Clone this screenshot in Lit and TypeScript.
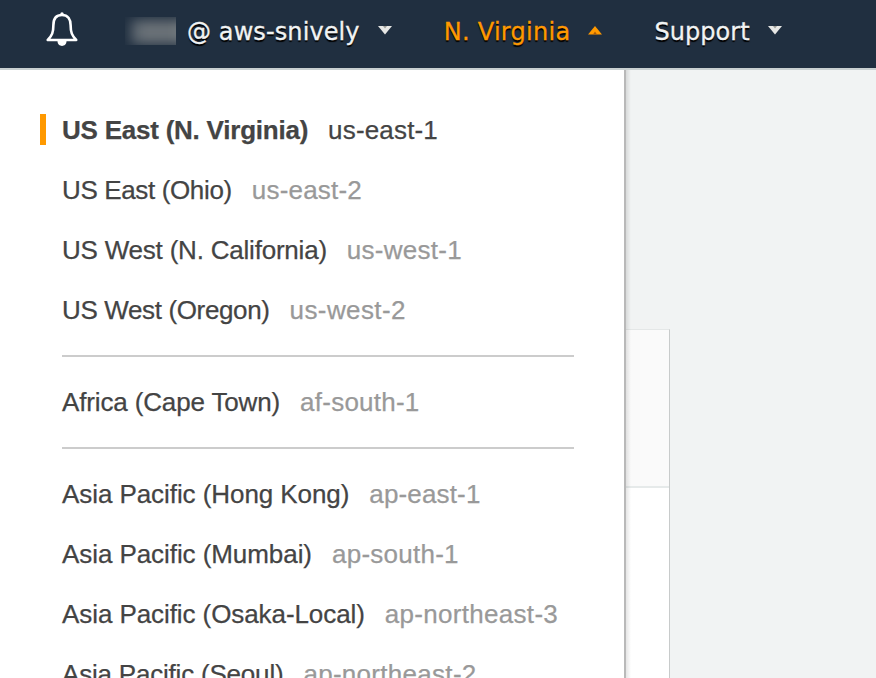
import { LitElement, html, css, svg } from "lit";
import { customElement, property } from "lit/decorators.js";
import { classMap } from "lit/directives/class-map.js";
import { styleMap } from "lit/directives/style-map.js";

interface Region {
  name: string;
  code: string;
  tracking: number;
  codeTracking: number;
  current?: boolean;
}

const GROUPS: Region[][] = [
  [
    { name: "US East (N. Virginia)", code: "us-east-1", tracking: -0.23, codeTracking: 0.17, current: true },
    { name: "US East (Ohio)", code: "us-east-2", tracking: -0.36, codeTracking: 0.2 },
    { name: "US West (N. California)", code: "us-west-1", tracking: -0.21, codeTracking: 0.26 },
    { name: "US West (Oregon)", code: "us-west-2", tracking: -0.36, codeTracking: 0.4 },
  ],
  [{ name: "Africa (Cape Town)", code: "af-south-1", tracking: -0.14, codeTracking: 0.24 }],
  [
    { name: "Asia Pacific (Hong Kong)", code: "ap-east-1", tracking: -0.07, codeTracking: 0.15 },
    { name: "Asia Pacific (Mumbai)", code: "ap-south-1", tracking: -0.07, codeTracking: 0.26 },
    { name: "Asia Pacific (Osaka-Local)", code: "ap-northeast-3", tracking: -0.08, codeTracking: 0.3 },
    { name: "Asia Pacific (Seoul)", code: "ap-northeast-2", tracking: -0.2, codeTracking: 0.29 },
  ],
];

@customElement("nav-item")
class NavItem extends LitElement {
  @property() label = "";
  @property({ type: Boolean, reflect: true }) open = false;

  static styles = css`
    :host {
      display: flex;
      align-items: center;
      color: #f1f3f3;
      white-space: nowrap;
      text-shadow: 0 2px 1px #000;
      -webkit-text-stroke: 0.3px currentColor;
    }
    :host([open]) {
      color: #ff9900;
    }
    .caret {
      display: block;
      width: 14px;
      height: 9px;
      margin: -4px 0 0 18px;
      fill: #e6e6e4;
      -webkit-text-stroke: 0;
    }
    :host([open]) .caret {
      fill: #ff9900;
    }
    .notch {
      fill: #9a9b94;
    }
    :host([open]) .notch {
      fill: #a85a08;
    }
  `;

  render() {
    return html`<span>${this.label}</span>
      <svg class="caret" viewBox="0 0 14 9">
        ${this.open
          ? svg`<path d="M7 0L14 8.6H0Z"/><path class="notch" d="M7 5.500L9 8.6H5Z"/>`
          : svg`<path d="M0 0H14L7 8.6Z"/><path class="notch" d="M5 0H9L7 2.500Z"/>`}
      </svg>`;
  }
}

@customElement("region-row")
class RegionRow extends LitElement {
  @property({ attribute: false }) region!: Region;

  static styles = css`
    .row {
      display: flex;
      align-items: center;
      height: 60px;
      color: #444;
      white-space: nowrap;
      -webkit-text-stroke: 0.25px currentColor;
    }
    .mark {
      width: 6px;
      height: 31px;
      margin: -1px 16px 0 0;
    }
    .code {
      margin-left: 20px;
      color: #999;
    }
    .current .mark {
      background: #ff9900;
    }
    .current .name {
      font-weight: 700;
    }
    .current .code {
      color: #444;
    }
  `;

  render() {
    const r = this.region;
    return html`<div class=${classMap({ row: true, current: !!r.current })}>
      <span class="mark"></span>
      <span class="name" style=${styleMap({ letterSpacing: `${r.tracking}px` })}>${r.name}</span>
      <span class="code" style=${styleMap({ letterSpacing: `${r.codeTracking}px` })}>${r.code}</span>
    </div>`;
  }
}

@customElement("app-root")
class AppRoot extends LitElement {
  static styles = css`
    :host {
      display: flex;
      flex-direction: column;
      width: 876px;
      height: 678px;
      overflow: hidden;
      background: #f1f3f3;
    }
    .header {
      box-sizing: border-box;
      flex: none;
      display: flex;
      align-items: center;
      height: 70px;
      padding: 0 0 4px 46px;
      background: #202f40;
      border-bottom: 2px solid #c9d0d1;
      font: 24px/30px "DejaVu Sans", Verdana, sans-serif;
    }
    .bell {
      flex: none;
      width: 32px;
      height: 36px;
      margin-top: -4px;
    }
    .redacted {
      flex: none;
      width: 51px;
      height: 28px;
      margin: -2px 11px 0 47px;
      overflow: hidden;
    }
    .smudge {
      display: block;
      width: 60px;
      height: 24px;
      margin: 3px 0 0 6px;
      background: linear-gradient(90deg, #59636c, #6c7379 30%, #686f75 60%, #7b8185);
      filter: blur(6px);
    }
    .account {
      letter-spacing: 0.1px;
    }
    .region-menu {
      margin-left: 52px;
      letter-spacing: 0.28px;
    }
    .support {
      margin-left: 52px;
      letter-spacing: 0.05px;
    }
    .body {
      flex: 1;
      min-height: 0;
      display: flex;
    }
    .menu {
      box-sizing: border-box;
      position: relative;
      flex: none;
      width: 626px;
      padding: 30px 50px 0 40px;
      overflow: hidden;
      background: #fff;
      border-right: 2px solid #b9b9b9;
      font: 26px/30px "Liberation Sans", Arial, sans-serif;
    }
    .shade {
      flex: none;
      position: relative;
      width: 5px;
      margin-right: -5px;
      background: linear-gradient(90deg, rgba(0, 0, 0, 0.1), rgba(0, 0, 0, 0));
    }
    .divider {
      height: 2px;
      margin: 15px 0 15px 22px;
      background: #ccc;
    }
    .panel {
      width: 43px;
      margin-top: 259px;
      background: #fff;
      border-right: 1px solid #c8cbcb;
      border-top: 1px solid #e4e7e7;
    }
    .panel-head {
      height: 156px;
      background: #fafafa;
      border-bottom: 2px solid #e6eaea;
    }
  `;

  render() {
    return html`
      <header class="header">
        <svg class="bell" viewBox="0 0 32 36" fill="none" stroke="#fff" stroke-width="2.6" stroke-linejoin="round">
          <path d="M16 3C9.800 3 7.400 7.500 7.400 13C7.400 20.500 6 23.500 1.800 28H30.200C26 23.500 24.600 20.500 24.600 13C24.600 7.500 22.200 3 16 3Z" />
          <circle cx="16" cy="1.900" r="1.700" fill="#fff" stroke="none" />
          <path d="M11.500 29C11.500 35.500 20.500 35.500 20.500 29Z" fill="#fff" stroke="none" />
        </svg>
        <span class="redacted"><span class="smudge"></span></span>
        <nav-item class="account" label="@ aws-snively"></nav-item>
        <nav-item class="region-menu" label="N. Virginia" open></nav-item>
        <nav-item class="support" label="Support"></nav-item>
      </header>
      <div class="body">
        <nav class="menu">
          ${GROUPS.map(
            (group, i) => html`${i ? html`<div class="divider"></div>` : ""}
            ${group.map((r) => html`<region-row .region=${r}></region-row>`)}`
          )}
        </nav>
        <div class="shade"></div>
        <div class="panel"><div class="panel-head"></div></div>
      </div>
    `;
  }
}
